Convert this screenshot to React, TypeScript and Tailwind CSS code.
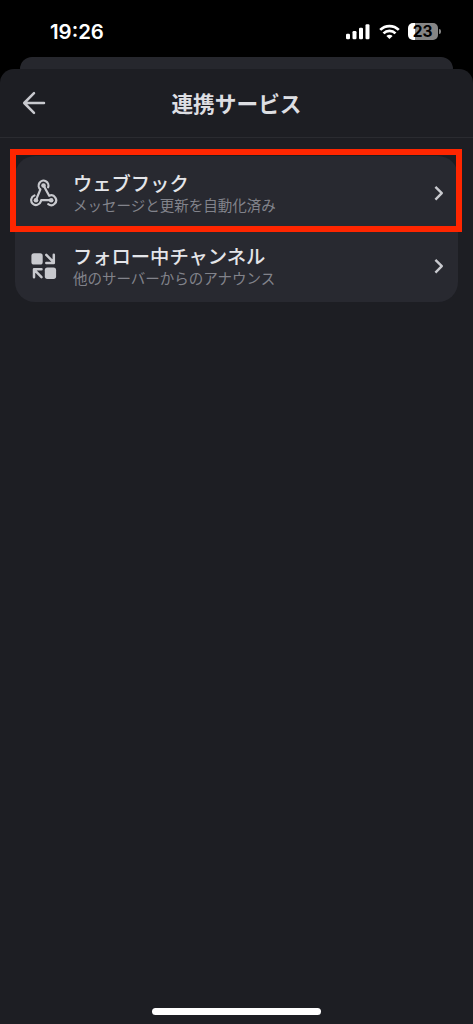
import React from 'react';

const FONT = "font-['Inter','Noto_Sans_CJK_JP',sans-serif]";

const SignalIcon = () => (
  <svg width="24" height="16" viewBox="0 0 24 16" fill="#fff">
    <rect x="0" y="9.7" width="4" height="5.5" rx="1.2" />
    <rect x="6.5" y="7" width="4" height="8.2" rx="1.2" />
    <rect x="13" y="3.7" width="4" height="11.5" rx="1.2" />
    <rect x="19.5" y="0.2" width="4" height="15" rx="1.2" />
  </svg>
);

const WifiIcon = () => (
  <svg width="21" height="16" viewBox="0 0 21 16" fill="none" stroke="#fff" strokeWidth="2.7">
    <path d="M1.2 5.9a13.2 13.2 0 0 1 18.6 0" />
    <path d="M4.5 9.4a8.5 8.5 0 0 1 12 0" />
    <path d="M10.5 15.1 7.4 12a4.4 4.4 0 0 1 6.2 0Z" fill="#fff" stroke="none" />
  </svg>
);

const BatteryIcon = () => (
  <div className="flex items-center">
    <div className="flex h-[17px] w-[30.5px] items-center justify-center rounded-[5px] bg-[linear-gradient(to_right,#fff_7px,#858585_7px)] text-[15.5px] font-bold leading-none text-black">
      23
    </div>
    <div className="ml-px h-[5px] w-[2px] rounded-r-full bg-[#858585]" />
  </div>
);

const BackIcon = () => (
  <svg width="24" height="24" viewBox="0 0 24 24" fill="none" stroke="#c8c9ce" strokeWidth="2.5" strokeLinecap="round" strokeLinejoin="round">
    <path d="M22 12H2.5M12 2.2 2.2 12l9.8 9.8" />
  </svg>
);

const WebhookIcon = () => (
  <svg width="28" height="28" viewBox="0 0 28 28" fill="none" stroke="#c8c9ce" strokeWidth="2.2" strokeLinecap="round" strokeLinejoin="round">
    <path d="M18.1 8.3a4.9 4.9 0 1 0-7.7 2L6 21" />
    <path d="M4.4 16.5A4.9 4.9 0 1 0 10.8 22.4L11.2 21.2H21.2" />
    <path d="M18.3 25.2A4.9 4.9 0 1 0 19.2 16.8L13.5 6.4" />
    <g fill="#c8c9ce" stroke="none">
      <circle cx="13.5" cy="6.5" r="2.3" />
      <circle cx="6" cy="21.2" r="2.3" />
      <circle cx="21.2" cy="21.2" r="2.3" />
    </g>
  </svg>
);

const FollowIcon = () => (
  <svg width="28" height="28" viewBox="0 0 28 28" fill="none" stroke="#c8c9ce" strokeWidth="2.5" strokeLinecap="round" strokeLinejoin="round">
    <rect x="1.4" y="1.3" width="11.3" height="11.3" rx="2.6" fill="#c8c9ce" stroke="none" />
    <rect x="14.8" y="15.6" width="11.3" height="11.3" rx="2.6" fill="#c8c9ce" stroke="none" />
    <path d="m16.3 2.9 7.4 7.4M23.8 2.7V10.9H16.3" />
    <path d="m11.5 25.1-7.4-7.4M4 25.3V17.2H11.5" />
  </svg>
);

const ChevronIcon = () => (
  <svg width="10" height="16" viewBox="0 0 10 16" fill="none" stroke="#c8c9ce" strokeWidth="2.4" strokeLinejoin="round">
    <path d="m1.4 1.8 6.4 6.4-6.4 6.4" />
  </svg>
);

interface RowProps {
  icon: React.FC;
  title: string;
  subtitle: string;
}

const Row = ({ icon: Icon, title, subtitle }: RowProps) => (
  <div className="flex h-[73px] items-center pl-[15px] pr-[14px]">
    <Icon />
    <div className="ml-[15px] flex flex-1 flex-col pt-[2px]">
      <span className="text-[19.3px] font-medium leading-[24px] text-[#e4e5e9]">{title}</span>
      <span className="text-[14.5px] leading-[20px] text-[#82838b]">{subtitle}</span>
    </div>
    <ChevronIcon />
  </div>
);

export default function App() {
  return (
    <div className={`flex h-[1024px] w-[473px] flex-col overflow-hidden bg-black ${FONT}`}>
      <div className="flex h-[57px] shrink-0 items-center justify-between pb-px pl-[50px] pr-[32px] pt-[7px]">
        <span className="pt-[2px] text-[20.4px] font-semibold leading-none text-white">19:26</span>
        <div className="flex items-center">
          <SignalIcon />
          <div className="ml-[9px] mr-[8px]">
            <WifiIcon />
          </div>
          <BatteryIcon />
        </div>
      </div>

      <div className="mx-[20px] h-[12px] shrink-0 rounded-t-[12px] bg-[#26272d]" />

      <div className="flex flex-1 flex-col rounded-t-[14px] bg-[#1d1e23]">
        <header className="grid h-[69px] shrink-0 grid-cols-[1fr_auto_1fr] items-center border-b border-[#2a2b30] px-[22px]">
          <BackIcon />
          <h1 className="pt-[3px] text-[21.7px] font-bold leading-none text-[#dddee2]">連携サービス</h1>
          <span />
        </header>

        <div className="relative mx-[15px] mt-[18px] rounded-[20px] bg-[#282930]">
          <Row icon={WebhookIcon} title="ウェブフック" subtitle="メッセージと更新を自動化済み" />
          <Row icon={FollowIcon} title="フォロー中チャンネル" subtitle="他のサーバーからのアナウンス" />
          <div className="absolute -left-[5px] -top-[7px] h-[83px] w-[452px] border-[6px] border-[#ff2600]" />
        </div>

        <div className="mx-auto mb-[9px] mt-auto h-[7px] w-[169px] rounded-full bg-white" />
      </div>
    </div>
  );
}
